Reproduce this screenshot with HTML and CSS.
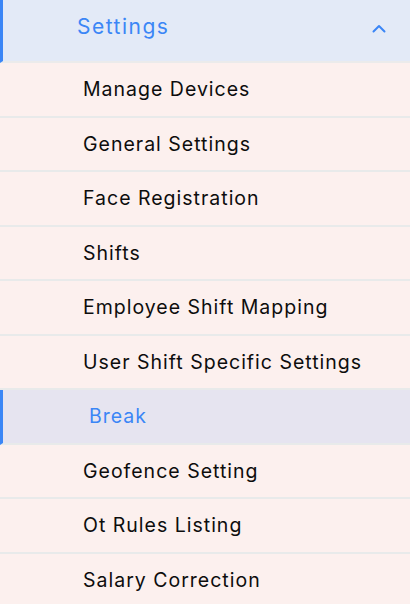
FILE: index.html
```html
<!DOCTYPE html>
<html>
<head>
<meta charset="utf-8">
<link rel="stylesheet" href="styles.css">
</head>
<body>
<nav class="menu">
  <div class="menu-head">
    <span class="menu-title">Settings</span>
    <svg class="chev" width="14" height="9" viewBox="0 0 14 9"><path d="M1.5 7.5 L7 2 L12.5 7.5" fill="none" stroke="#3b86f6" stroke-width="2" stroke-linecap="round" stroke-linejoin="round"/></svg>
  </div>
  <ul class="sub">
    <li class="item">Manage Devices</li>
    <li class="item">General Settings</li>
    <li class="item">Face Registration</li>
    <li class="item">Shifts</li>
    <li class="item">Employee Shift Mapping</li>
    <li class="item">User Shift Specific Settings</li>
    <li class="item active">Break</li>
    <li class="item">Geofence Setting</li>
    <li class="item">Ot Rules Listing</li>
    <li class="item">Salary Correction</li>
  </ul>
</nav>
</body>
</html>
```
FILE: styles.css
```css
html, body {
  margin: 0;
  padding: 0;
  background: #fcf0ee;
}
.menu {
  width: 410px;
  font-family: "Inter", "Liberation Sans", sans-serif;
}
.menu-head {
  height: 63px;
  box-sizing: border-box;
  background: #e3eaf7;
  border-left: 3px solid #3b86f6;
  border-bottom: 2px solid #ebebeb;
  display: flex;
  align-items: center;
  justify-content: space-between;
  padding: 0 24px 8px 74px;
}
.menu-title {
  color: #3b86f6;
  font-size: 21px;
  letter-spacing: 1.5px;
  font-weight: 400;
}
.chev {
  display: block;
  margin-top: 4px;
}
.sub {
  list-style: none;
  margin: 0;
  padding: 0;
}
.item {
  height: 52.5px;
  border-bottom: 2px solid #e8eaea;
  display: flex;
  align-items: center;
  padding-left: 83px;
  font-size: 19.5px;
  font-weight: 400;
  letter-spacing: 1px;
  color: #0d0d0d;
}
.item.active {
  background: #e6e4f0;
  border-left: 3px solid #3b86f6;
  padding-left: 86px;
  color: #3b86f6;
  font-weight: 400;
}
```
